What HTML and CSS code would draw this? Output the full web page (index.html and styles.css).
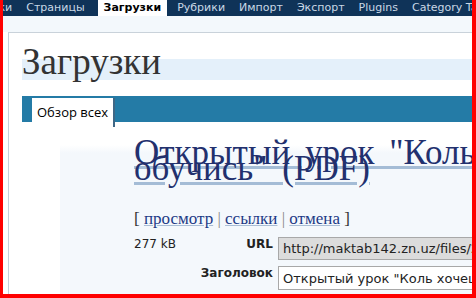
FILE: index.html
```html
<!DOCTYPE html>
<html lang="ru">
<head>
  <meta charset="UTF-8">
  <title>Загрузки</title>
  <link rel="stylesheet" href="styles.css">
</head>
<body>
  <div class="frame">
    <ul class="menu">
      <li>Ссылки</li>
      <li>Страницы</li>
      <li class="current">Загрузки</li>
      <li>Рубрики</li>
      <li>Импорт</li>
      <li>Экспорт</li>
      <li>Plugins</li>
      <li>Category Tagging</li>
    </ul>
    <div class="submenu"></div>

    <div class="wrap">
      <h2>Загрузки</h2>

      <div class="tabs">
        <span class="tab">Обзор всех</span>
      </div>

      <div class="file">
        <h3><a href="#">Открытый урок "Коль хочешь научиться —<br>обучись" (PDF)</a></h3>

        <p class="actions">
          [ <a href="#">просмотр</a> <span class="sep">|</span>
          <a href="#">ссылки</a> <span class="sep">|</span>
          <a href="#">отмена</a> ]
        </p>

        <div class="fields">
          <span class="size">277 kB</span>
          <label for="url">URL</label>
          <input type="text" id="url" class="readonly" value="http://maktab142.zn.uz/files/2008/open-lesson.pdf" readonly>

          <span></span>
          <label for="title">Заголовок</label>
          <input type="text" id="title" value='Открытый урок "Коль хочешь научиться — обучись"'>
        </div>
      </div>
    </div>
  </div>
</body>
</html>
```

FILE: styles.css
```css
* {
  box-sizing: border-box;
}

body {
  margin: 0;
  background: white;
  font-family: "DejaVu Sans", Verdana, sans-serif;
}

.frame {
  height: 298px;
  border: 0 solid #f00;
  border-width: 0 4px 4px 3px;
  overflow: hidden;
}

/* top admin menu */
.menu {
  display: flex;
  margin: 0 0 0 -41px;
  padding: 0;
  list-style: none;
  height: 16px;
  background: #0f3358;
  white-space: nowrap;
}

.menu li {
  padding: 0 7px;
  font-size: 11px;
  line-height: 16px;
  color: #c9d8e6;
}

.menu li.current {
  margin: 0 3px 0 6px;
  padding: 0 6px;
  background: white;
  color: #000;
  font-weight: bold;
}

.submenu {
  height: 16px;
  background: #f3f8fc;
}

.wrap {
  margin-left: 5px;
  padding-left: 13px;
  border-left: 1px solid #c4cfd9;
  border-top: 1px solid #c9d2da;
  height: 300px;
}

h2 {
  margin: 10px 0 0;
  height: 37px;
  font-family: "Liberation Serif", "Times New Roman", serif;
  font-size: 37px;
  font-weight: normal;
  line-height: 37px;
  color: #333;
  background: linear-gradient(transparent 16px, #e4f0fa 16px);
}

.tabs {
  display: flex;
  align-items: flex-start;
  margin-top: 16px;
  height: 26px;
  padding-left: 10px;
  background: #247ba6;
}

.tab {
  margin-top: 2px;
  height: 29px;
  padding: 0 5px;
  background: white;
  box-shadow: 2px 0 0 #3f6785;
  font-family: "Open Sans", sans-serif;
  font-size: 13px;
  line-height: 28px;
  color: #000;
}

/* file details */
.file {
  margin: 23px 0 0 38px;
  padding-left: 74px;
  height: 200px;
  background: linear-gradient(#fff, #f4f8fc 8px);
}

h3 {
  margin: 0;
  font-family: "Liberation Serif", "Times New Roman", serif;
  font-size: 35px;
  font-weight: normal;
  line-height: 16px;
  word-spacing: 6px;
  white-space: nowrap;
}

h3 a {
  color: #22306e;
  text-decoration: underline;
  text-decoration-color: #a4bcd6;
}

.actions {
  margin: 32px 0 0;
  font-family: "Liberation Serif", "Times New Roman", serif;
  font-size: 17px;
  line-height: 20px;
  color: #333;
}

.actions a {
  color: #1d3a86;
  text-decoration: underline;
  text-decoration-color: #a9bdd5;
}

.actions .sep {
  color: #888;
}

.fields {
  display: grid;
  grid-template-columns: 62px 77px 1fr;
  grid-template-rows: 23px 24px;
  row-gap: 6px;
  margin-top: 8px;
}

.size {
  font-size: 12px;
  line-height: 15px;
  color: #222;
}

label {
  font-size: 12px;
  font-weight: bold;
  line-height: 15px;
  text-align: right;
  color: #222;
}

input[type="text"] {
  width: 260px;
  height: 100%;
  margin-left: 5px;
  padding: 0 4px;
  border: 1px solid #a8a8a8;
  font-family: "DejaVu Sans", Verdana, sans-serif;
  font-size: 13px;
  color: #222;
  background: white;
}

input.readonly {
  background: #dcdcdc;
}
```
